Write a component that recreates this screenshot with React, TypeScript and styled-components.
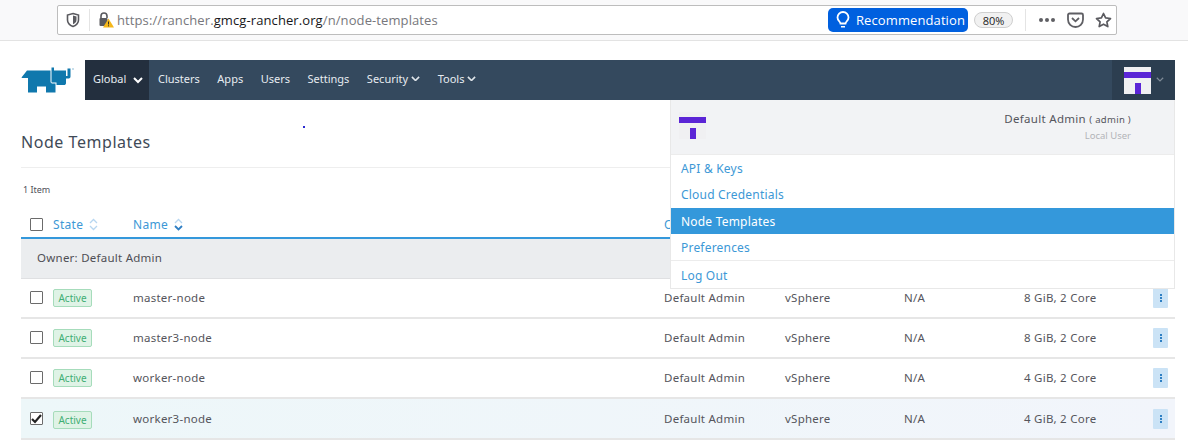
import React from "react";
import styled, { createGlobalStyle } from "styled-components";

const GlobalStyle = createGlobalStyle`
  html, body {
    margin: 0;
    padding: 0;
    background: #fff;
    overflow: hidden;
  }
  body {
    font-family: "Noto Sans", "Open Sans", sans-serif;
    color: #4f4f55;
  }
`;

const rows = [
    { name: "master-node", size: "8 GiB, 2 Core" },
    { name: "master3-node", size: "8 GiB, 2 Core" },
    { name: "worker-node", size: "4 GiB, 2 Core" },
    { name: "worker3-node", size: "4 GiB, 2 Core", checked: true },
];

const ShieldIcon = () => (
    <svg width="16" height="16" viewBox="0 0 16 16">
        <path d="M8 1.5 13.5 3v5c0 3.4-2.6 5.4-5.5 6.5C5.100 13.400 2.500 11.400 2.500 8V3Z" fill="none" stroke="#5a5a5f" strokeWidth="1.600" />
        <path d="M8 3.500 11.500 4.500V8c0 2-1.500 3.400-3.500 4.300Z" fill="#5a5a5f" />
    </svg>
);

const LockWarnIcon = () => (
    <svg width="16" height="18" viewBox="0 0 16 18">
        <path d="M3 7V5a3 3 0 0 1 6 0v2" fill="none" stroke="#5a5a5f" strokeWidth="1.600" />
        <rect x="1.500" y="7" width="8" height="8" rx="1" fill="#5a5a5f" />
        <path d="M10.500 7.500 16 16.500H5Z" fill="#f5b71a" />
        <rect x="10" y="10.500" width="1" height="3" fill="#3b3020" />
        <rect x="10" y="14.300" width="1" height="1" fill="#3b3020" />
    </svg>
);

const BulbIcon = () => (
    <svg width="14" height="18" viewBox="0 0 14 18">
        <path d="M4.500 12.500C4.200 10.500 1.500 9.500 1.500 6.500a5.500 5.500 0 0 1 11 0c0 3-2.700 4-3 6Z" fill="none" stroke="#fff" strokeWidth="1.800" />
        <path d="M5 15h4v1.500H5Z" fill="#fff" />
    </svg>
);

const PocketIcon = () => (
    <svg width="17" height="16" viewBox="0 0 17 16">
        <path d="M2.500 1.500h12a1.500 1.500 0 0 1 1.500 1.500v4.500a7.500 7.500 0 0 1-15 0V3A1.500 1.500 0 0 1 2.500 1.500Z" fill="none" stroke="#5f5f64" strokeWidth="1.800" />
        <path d="m5 6 3.500 3.300L12 6" fill="none" stroke="#5f5f64" strokeWidth="1.800" />
    </svg>
);

const StarIcon = () => (
    <svg width="17" height="16" viewBox="0 0 17 16">
        <path d="M8.500 1.500 10.600 5.900l4.900.6-3.600 3.300.9 4.800-4.300-2.400-4.300 2.400.9-4.800L1.500 6.500l4.900-.6Z" fill="none" stroke="#5a5a5f" strokeWidth="1.700" strokeLinejoin="round" />
    </svg>
);

const RhinoLogo = () => (
    <svg width="54" height="26" viewBox="0 0 54 26">
        <path d="M0.500 10.500 6 3.500H29.500V14.500C29.500 16 30.500 16.500 32 16.500H34.500V25.500H25V19.500H16V25.500H7V11H1Z" fill="#1078ad" />
        <path d="M30.500 0.500H33V3.500H45V9H46.500V1.500H49.500V9.500C49.500 11 48.500 11.500 47 11.500H45V16C45 17.500 44 18 43 18H35.500V15.500H30.500Z" fill="#1078ad" />
        <circle cx="52" cy="2" r="0.800" fill="#7fb4d0" />
    </svg>
);

const Chevron = ({ size = 9, color = "#fff", weight = 2 }: { size?: number; color?: string; weight?: number }) => (
    <svg width={size} height={size * 0.65} viewBox="0 0 10 6.500">
        <path d="M1 1l4 4 4-4" fill="none" stroke={color} strokeWidth={weight} />
    </svg>
);

const SortIcon = ({ down }: { down?: boolean }) => (
    <svg width="9" height="13" viewBox="0 0 9 13">
        <path d="M1 5l3.500-3.500L8 5" fill="none" stroke="#b7d6f0" strokeWidth="1.300" />
        <path d="M1 8l3.500 3.500L8 8" fill="none" stroke={down ? "#2f7fc4" : "#b7d6f0"} strokeWidth={down ? 1.800 : 1.300} />
    </svg>
);

const TenantLogo = () => (
    <AvatarBox>
        <svg width="27" height="27" viewBox="0 0 27 27">
            <rect y="5" width="27" height="6" fill="#5b25d6" />
            <rect x="11" y="16" width="6" height="11" fill="#5b25d6" />
        </svg>
    </AvatarBox>
);

const Page = styled.div`
  position: relative;
  width: 1188px;
  height: 447px;
  overflow: hidden;
`;

const CursorDot = styled.span`
  position: absolute;
  top: 126px;
  left: 303px;
  width: 2px;
  height: 2px;
  background: #2a2ad0;
`;

const BrowserBar = styled.header`
  box-sizing: border-box;
  height: 41px;
  padding: 5px 71px 0 57px;
  background: #f9f9fa;
  border-bottom: 1px solid #e3e3e3;
`;

const UrlBar = styled.div`
  box-sizing: border-box;
  height: 30px;
  display: flex;
  align-items: center;
  background: #fff;
  border: 1px solid #bdbdbd;
  border-radius: 2px;
  padding: 0 4px 0 7px;
`;

const BarDivider = styled.span<{ $gap?: number }>`
  width: 1px;
  height: 22px;
  background: #e4e4e4;
  margin: 0 ${(p) => p.$gap ?? 8}px;
`;

const UrlText = styled.span`
  font-family: "Open Sans", sans-serif;
  font-size: 13px;
  color: #77777c;
  margin-left: 3px;
  flex: 1;
  letter-spacing: 0.1px;
  b {
    font-weight: 400;
    color: #17171a;
  }
`;

const RecommendPill = styled.div`
  width: 140px;
  height: 24px;
  box-sizing: border-box;
  display: flex;
  align-items: center;
  gap: 6px;
  padding-left: 8px;
  background: #0060df;
  color: #fff;
  font-family: "Open Sans", sans-serif;
  font-size: 13px;
  letter-spacing: 0.1px;
  border-radius: 5px;
`;

const ZoomPill = styled.div`
  width: 39px;
  height: 16px;
  box-sizing: border-box;
  margin-left: 6px;
  display: flex;
  align-items: center;
  justify-content: center;
  background: #f1f1f1;
  border: 1px solid #cfcfcf;
  border-radius: 8px;
  font-family: "Open Sans", sans-serif;
  font-size: 11px;
  color: #222;
`;

const Dots = styled.span`
  display: flex;
  gap: 2px;
  margin: 0 12px 0 1px;
  i {
    width: 4px;
    height: 4px;
    border-radius: 50%;
    background: #5f5f64;
  }
`;

const IconSlot = styled.span<{ $left?: number }>`
  display: flex;
  margin-left: ${(p) => p.$left ?? 0}px;
`;

const TopRow = styled.div`
  display: flex;
  padding: 19px 13px 0 21px;
  height: 40px;
`;

const LogoSlot = styled.div`
  width: 64px;
  padding-top: 7px;
  flex: none;
`;

const NavBar = styled.nav`
  flex: 1;
  height: 40px;
  display: flex;
  align-items: center;
  background: #34495e;
  color: #e7ecf1;
  font-size: 11px;
  border-radius: 0 0 0 2px;
`;

const NavActive = styled.div`
  width: 64px;
  height: 40px;
  box-sizing: border-box;
  padding: 0 0 3px 8px;
  display: flex;
  align-items: center;
  gap: 7px;
  background: #232f3e;
  margin-right: 9px;
  svg {
    margin-top: 4px;
  }
`;

const NavItem = styled.span`
  display: flex;
  align-items: center;
  gap: 3px;
  padding-bottom: 3px;
  margin-right: 17.500px;
`;

const AccountBox = styled.div`
  margin-left: auto;
  width: 63px;
  height: 40px;
  box-sizing: border-box;
  padding-left: 12px;
  display: flex;
  align-items: center;
  gap: 5px;
  background: #2c3e50;
`;

const AvatarBox = styled.div`
  width: 27px;
  height: 27px;
  display: flex;
  background: #f0f0f2;
`;

const Content = styled.main`
  padding: 0 13px 0 21px;
`;

const Title = styled.h1`
  margin: 0;
  height: 68px;
  box-sizing: border-box;
  padding-top: 30px;
  font-size: 16px;
  line-height: 24px;
  font-weight: 400;
  color: #3f4a57;
  border-bottom: 1px solid #eeeeee;
  letter-spacing: 0.55px;
`;

const ItemCount = styled.div`
  height: 42px;
  padding: 14px 0 0 2px;
  box-sizing: border-box;
  font-size: 9px;
  line-height: 16px;
  color: #50505a;
`;

const columns = "23px 80px 531px 121px 119px 120px 129px 22px";

const HeadRow = styled.div`
  display: grid;
  grid-template-columns: ${columns};
  align-items: center;
  height: 29px;
  box-sizing: border-box;
  padding: 2px 0 0 9px;
  border-bottom: 2px solid #3498db;
  font-size: 12px;
  color: #3d98d6;
`;

const HeadCell = styled.span`
  display: flex;
  align-items: center;
  gap: 6px;
  letter-spacing: 0.3px;
`;

const GroupRow = styled.div`
  height: 40px;
  box-sizing: border-box;
  padding: 0 0 2px 16px;
  display: flex;
  align-items: center;
  background: #ebedef;
  border-bottom: 1px solid #dfe0e2;
  font-size: 11.500px;
  color: #4f4f55;
  letter-spacing: 0.25px;
`;

const Row = styled.div<{ $checked?: boolean }>`
  display: grid;
  grid-template-columns: ${columns};
  align-items: center;
  height: ${(p) => (p.$checked ? 41 : 40)}px;
  box-sizing: border-box;
  padding: 0 0 ${(p) => (p.$checked ? 0 : 2)}px 9px;
  background: ${(p) => (p.$checked ? "linear-gradient(90deg, #edf7f9, #f2f5fb)" : "#fff")};
  border-bottom: 2px solid #e6e6e6;
  font-size: 11.500px;
  color: #55555c;
  letter-spacing: 0.25px;
`;

const Check = styled.span`
  width: 13px;
  height: 13px;
  box-sizing: border-box;
  background: #fff;
  border: 1px solid #6b6b6b;
  border-radius: 1px;
  display: flex;
  align-items: center;
  justify-content: center;
`;

const Badge = styled.span`
  width: 39px;
  height: 18px;
  margin-top: 2px;
  box-sizing: border-box;
  display: flex;
  align-items: center;
  justify-content: center;
  background: #dff3e6;
  border: 1px solid #a6dcbb;
  border-radius: 2px;
  color: #3fae74;
  font-size: 10px;
  letter-spacing: 0;
`;

const ActionButton = styled.span`
  width: 15px;
  height: 20px;
  margin-top: 1px;
  display: flex;
  flex-direction: column;
  align-items: center;
  justify-content: center;
  gap: 1px;
  background: #cbe3f6;
  border-radius: 1px;
  i {
    width: 2px;
    height: 2px;
    background: #2f80c4;
  }
`;

const Menu = styled.aside`
  position: absolute;
  top: 100px;
  left: 670px;
  width: 505px;
  height: 189px;
  box-sizing: border-box;
  background: #fff;
  border: 1px solid #e8e8e8;
  border-top: 0;
`;

const MenuHead = styled.div`
  height: 55px;
  box-sizing: border-box;
  display: flex;
  justify-content: space-between;
  padding: 12px 43px 0 8px;
  background: #f2f3f5;
  border-bottom: 1px solid #ececec;
`;

const UserInfo = styled.div`
  text-align: right;
  margin-top: -1px;
  font-size: 11.500px;
  line-height: 16px;
  color: #55555c;
  letter-spacing: 0.3px;
  small {
    font-size: 9.500px;
  }
`;

const UserKind = styled.div`
  font-size: 9.500px;
  line-height: 14px;
  margin-top: 1px;
  color: #b3b3b8;
  letter-spacing: 0;
`;

const MenuEntry = styled.div<{ $active?: boolean; $last?: boolean }>`
  height: 26px;
  display: flex;
  align-items: center;
  padding-left: 10px;
  font-size: 12px;
  letter-spacing: 0.2px;
  margin-bottom: ${(p) => (p.$last ? 1 : 0)}px;
  color: ${(p) => (p.$active ? "#fff" : "#3d98d6")};
  background: ${(p) => (p.$active ? "#3498db" : "transparent")};
`;

const LogoutEntry = styled(MenuEntry)`
  height: 28px;
  box-sizing: border-box;
  padding-top: 2px;
  border-top: 1px solid #ececec;
`;

export default function App() {
    return (
        <Page>
            <GlobalStyle />
            <BrowserBar>
                <UrlBar>
                    <ShieldIcon />
                    <BarDivider />
                    <LockWarnIcon />
                    <UrlText>
                        https://rancher.<b>gmcg-rancher.org</b>/n/node-templates
                    </UrlText>
                    <RecommendPill>
                        <BulbIcon />
                        Recommendation
                    </RecommendPill>
                    <ZoomPill>80%</ZoomPill>
                    <BarDivider $gap={12} />
                    <Dots>
                        <i />
                        <i />
                        <i />
                    </Dots>
                    <IconSlot>
                        <PocketIcon />
                    </IconSlot>
                    <IconSlot $left={11}>
                        <StarIcon />
                    </IconSlot>
                </UrlBar>
            </BrowserBar>
            <TopRow>
                <LogoSlot>
                    <RhinoLogo />
                </LogoSlot>
                <NavBar>
                    <NavActive>
                        Global <Chevron size={10} />
                    </NavActive>
                    <NavItem>Clusters</NavItem>
                    <NavItem>Apps</NavItem>
                    <NavItem>Users</NavItem>
                    <NavItem>Settings</NavItem>
                    <NavItem>
                        Security <Chevron size={9} color="#dfe5ea" weight={1.800} />
                    </NavItem>
                    <NavItem>
                        Tools <Chevron size={9} color="#dfe5ea" weight={1.800} />
                    </NavItem>
                    <AccountBox>
                        <TenantLogo />
                        <Chevron size={8} color="#7f8b97" weight={1.500} />
                    </AccountBox>
                </NavBar>
            </TopRow>
            <Content>
                <Title>Node Templates</Title>
                <ItemCount>1 Item</ItemCount>
                <HeadRow>
                    <Check />
                    <HeadCell>
                        State <SortIcon />
                    </HeadCell>
                    <HeadCell>
                        Name <SortIcon down />
                    </HeadCell>
                    <HeadCell>Owner</HeadCell>
                </HeadRow>
                <GroupRow>Owner: Default Admin</GroupRow>
                {rows.map((row) => (
                    <Row key={row.name} $checked={row.checked}>
                        <Check>
                            {row.checked && (
                                <svg width="11" height="10" viewBox="0 0 11 10">
                                    <path d="M1 5l3 3 6-7" fill="none" stroke="#222" strokeWidth="2.200" />
                                </svg>
                            )}
                        </Check>
                        <Badge>Active</Badge>
                        <span>{row.name}</span>
                        <span>Default Admin</span>
                        <span>vSphere</span>
                        <span>N/A</span>
                        <span>{row.size}</span>
                        <ActionButton>
                            <i />
                            <i />
                            <i />
                        </ActionButton>
                    </Row>
                ))}
            </Content>
            <CursorDot />
            <Menu>
                <MenuHead>
                    <TenantLogo />
                    <UserInfo>
                        Default Admin <small>( admin )</small>
                        <UserKind>Local User</UserKind>
                    </UserInfo>
                </MenuHead>
                <MenuEntry>API &amp; Keys</MenuEntry>
                <MenuEntry $last>Cloud Credentials</MenuEntry>
                <MenuEntry $active>Node Templates</MenuEntry>
                <MenuEntry>Preferences</MenuEntry>
                <LogoutEntry>Log Out</LogoutEntry>
            </Menu>
        </Page>
    );
}
